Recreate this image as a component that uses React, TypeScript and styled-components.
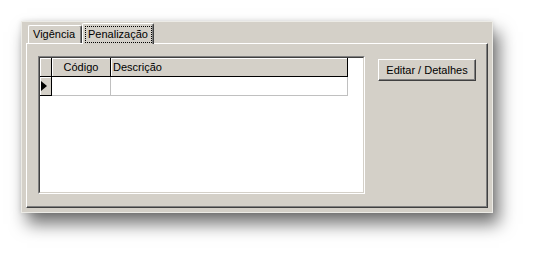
import styled, { createGlobalStyle } from 'styled-components';

const GlobalStyle = createGlobalStyle`
  body {
    margin: 0;
    background: #ffffff;
    font-family: "Liberation Sans", Arial, sans-serif;
    font-size: 11px;
    color: #000;
  }
`;

const Page = styled.div`
  padding: 21px 0 0 21px;
  width: 534px;
  height: 254px;
  box-sizing: border-box;
`;

const Window = styled.div`
  width: 472px;
  height: 192px;
  box-sizing: border-box;
  background: #d4d0c8;
  border: 1px solid #ecebe6;
  padding: 1px 4px 4px 4px;
  display: flex;
  flex-direction: column;
  box-shadow: 0 0 5px rgba(0, 0, 0, 0.12), 6px 11px 16px rgba(0, 0, 0, 0.55);
`;

const TabStrip = styled.div`
  display: flex;
  align-items: flex-end;
  height: 20px;
  padding-left: 2px;
`;

const Tab = styled.div<{ $active?: boolean }>`
  position: relative;
  box-sizing: border-box;
  height: ${(p) => (p.$active ? '21px' : '18px')};
  margin-bottom: ${(p) => (p.$active ? '-1px' : '0')};
  width: ${(p) => (p.$active ? '72px' : '54px')};
  z-index: ${(p) => (p.$active ? 1 : 0)};
  background: #d4d0c8;
  border-top: 1px solid #ffffff;
  border-left: 1px solid #ffffff;
  border-right: 1px solid #404040;
  border-top-left-radius: 2px;
  border-top-right-radius: 2px;
  box-shadow: inset -1px 0 0 #808080;
  display: flex;
  align-items: flex-start;
  padding: ${(p) => (p.$active ? '2px 0 0 2px' : '2px 0 0 4px')};
`;

const FocusLabel = styled.span`
  border: 1px dotted #000;
  padding: 0 3px 1px 2px;
  line-height: 14px;
`;

const Panel = styled.div`
  flex: 1;
  box-sizing: border-box;
  border: 1px solid;
  border-color: #ffffff #404040 #404040 #ffffff;
  box-shadow: inset -1px -1px 0 #808080;
  padding: 12px 0 0 11px;
  display: flex;
  align-items: flex-start;
`;

const GridOuter = styled.div`
  width: 327px;
  height: 138px;
  box-sizing: border-box;
  border: 1px solid;
  border-color: #808080 #ffffff #ffffff #808080;
`;

const GridInner = styled.div`
  height: 100%;
  box-sizing: border-box;
  border: 1px solid;
  border-color: #404040 #d4d0c8 #d4d0c8 #404040;
  background: #ffffff;
`;

const Row = styled.div`
  display: flex;
  height: 19px;
`;

const HeaderCell = styled.div<{ $w: number; $center?: boolean }>`
  width: ${(p) => p.$w}px;
  box-sizing: border-box;
  background: #d4d0c8;
  border-right: 1px solid #000;
  border-bottom: 1px solid #000;
  box-shadow: inset 1px 1px 0 #ffffff;
  display: flex;
  align-items: center;
  justify-content: ${(p) => (p.$center ? 'center' : 'flex-start')};
  padding-left: ${(p) => (p.$center ? '0' : '2px')};
`;

const Indicator = styled(HeaderCell)`
  padding-left: 1px;
`;

const DataCell = styled.div<{ $w: number }>`
  width: ${(p) => p.$w}px;
  box-sizing: border-box;
  border-right: 1px solid #c0c0c0;
  border-bottom: 1px solid #c0c0c0;
`;

const Button = styled.button`
  margin: 3px 0 0 13px;
  width: 98px;
  height: 22px;
  box-sizing: border-box;
  background: #d4d0c8;
  font-family: inherit;
  font-size: 11px;
  color: #000;
  border: 1px solid;
  border-color: #ffffff #404040 #404040 #ffffff;
  box-shadow: inset -1px -1px 0 #808080;
  padding: 0;
`;

const Arrow = () => (
  <svg width="6" height="10" viewBox="0 0 6 10">
    <path d="M0 0 L6 5 L0 10 Z" fill="#000" />
  </svg>
);

export default function App() {
  return (
    <Page>
      <GlobalStyle />
      <Window>
        <TabStrip>
          <Tab>Vigência</Tab>
          <Tab $active>
            <FocusLabel>Penalização</FocusLabel>
          </Tab>
        </TabStrip>
        <Panel>
          <GridOuter>
            <GridInner>
              <Row>
                <HeaderCell $w={12} />
                <HeaderCell $w={59} $center>Código</HeaderCell>
                <HeaderCell $w={237}>Descrição</HeaderCell>
              </Row>
              <Row>
                <Indicator $w={12}>
                  <Arrow />
                </Indicator>
                <DataCell $w={59} />
                <DataCell $w={237} />
              </Row>
            </GridInner>
          </GridOuter>
          <Button>Editar / Detalhes</Button>
        </Panel>
      </Window>
    </Page>
  );
}
